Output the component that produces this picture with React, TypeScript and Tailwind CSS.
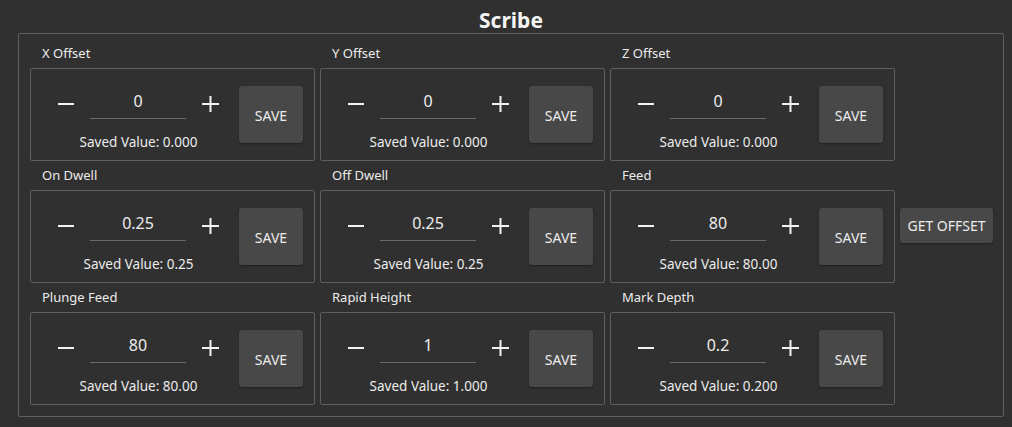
import React from "react";

type Field = { label: string; value: string; saved: string };

const rows: Field[][] = [
  [
    { label: "X Offset", value: "0", saved: "0.000" },
    { label: "Y Offset", value: "0", saved: "0.000" },
    { label: "Z Offset", value: "0", saved: "0.000" },
  ],
  [
    { label: "On Dwell", value: "0.25", saved: "0.25" },
    { label: "Off Dwell", value: "0.25", saved: "0.25" },
    { label: "Feed", value: "80", saved: "80.00" },
  ],
  [
    { label: "Plunge Feed", value: "80", saved: "80.00" },
    { label: "Rapid Height", value: "1", saved: "1.000" },
    { label: "Mark Depth", value: "0.2", saved: "0.200" },
  ],
];

function MinusIcon() {
  return (
    <svg width="16" height="16" viewBox="0 0 16 16" className="shrink-0">
      <rect x="0" y="7" width="16" height="2" fill="#f2f2f2" />
    </svg>
  );
}

function PlusIcon() {
  return (
    <svg width="17" height="16" viewBox="0 0 17 16" className="shrink-0">
      <rect x="0" y="7" width="17" height="2" fill="#f2f2f2" />
      <rect x="7.5" y="0" width="2" height="16" fill="#f2f2f2" />
    </svg>
  );
}

function FieldBox({ field }: { field: Field }) {
  return (
    <div className="flex w-[285px] flex-col">
      <div className="h-[18px] pl-[12px] text-[13px] leading-[18px] text-[#ececec]">
        {field.label}
      </div>
      <div className="mt-[6px] flex h-[93px] items-start rounded-[2px] border border-[#5e5e5e] pl-[27px]">
        <div className="flex flex-col items-center pt-[19px]">
          <div className="flex items-center gap-[16px]">
            <MinusIcon />
            <div className="flex h-[31px] w-[96px] items-start justify-center border-b border-[#6b6b6b] pt-[2px] text-[16px] leading-[22px] text-[#ececec]">
              {field.value}
            </div>
            <PlusIcon />
          </div>
          <div className="mt-[14px] text-[13.5px] leading-[18px] text-[#ececec]">
            Saved Value: {field.saved}
          </div>
        </div>
        <button className="ml-[20px] h-[57px] w-[64px] self-center rounded-[3px] bg-[#484848] pt-[2px] text-[14px] text-[#ececec] shadow-[0_1px_2px_rgba(0,0,0,0.35)]">
          SAVE
        </button>
      </div>
    </div>
  );
}

export default function App() {
  return (
    <div
      className="h-[427px] w-[1012px] bg-[#303030] pt-[8px]"
      style={{ fontFamily: '"Noto Sans", "Open Sans", sans-serif' }}
    >
      <div className="h-[25px] pl-[10px] text-center text-[21px] font-bold leading-[25px] text-[#f4f4f4]">
        Scribe
      </div>
      <div className="ml-[18px] h-[384px] w-[986px] rounded-[2px] border border-[#5e5e5e] pl-[11px] pt-[10px]">
        <div className="flex flex-col gap-[5px]">
          {rows.map((row, i) => (
            <div key={i} className="flex items-center gap-[5px]">
              {row.map((f) => (
                <FieldBox key={f.label} field={f} />
              ))}
              {i === 1 && (
                <button className="mt-[2px] h-[35px] w-[93px] rounded-[3px] bg-[#484848] text-[14px] text-[#ececec] shadow-[0_1px_2px_rgba(0,0,0,0.35)]">
                  GET OFFSET
                </button>
              )}
            </div>
          ))}
        </div>
      </div>
    </div>
  );
}
